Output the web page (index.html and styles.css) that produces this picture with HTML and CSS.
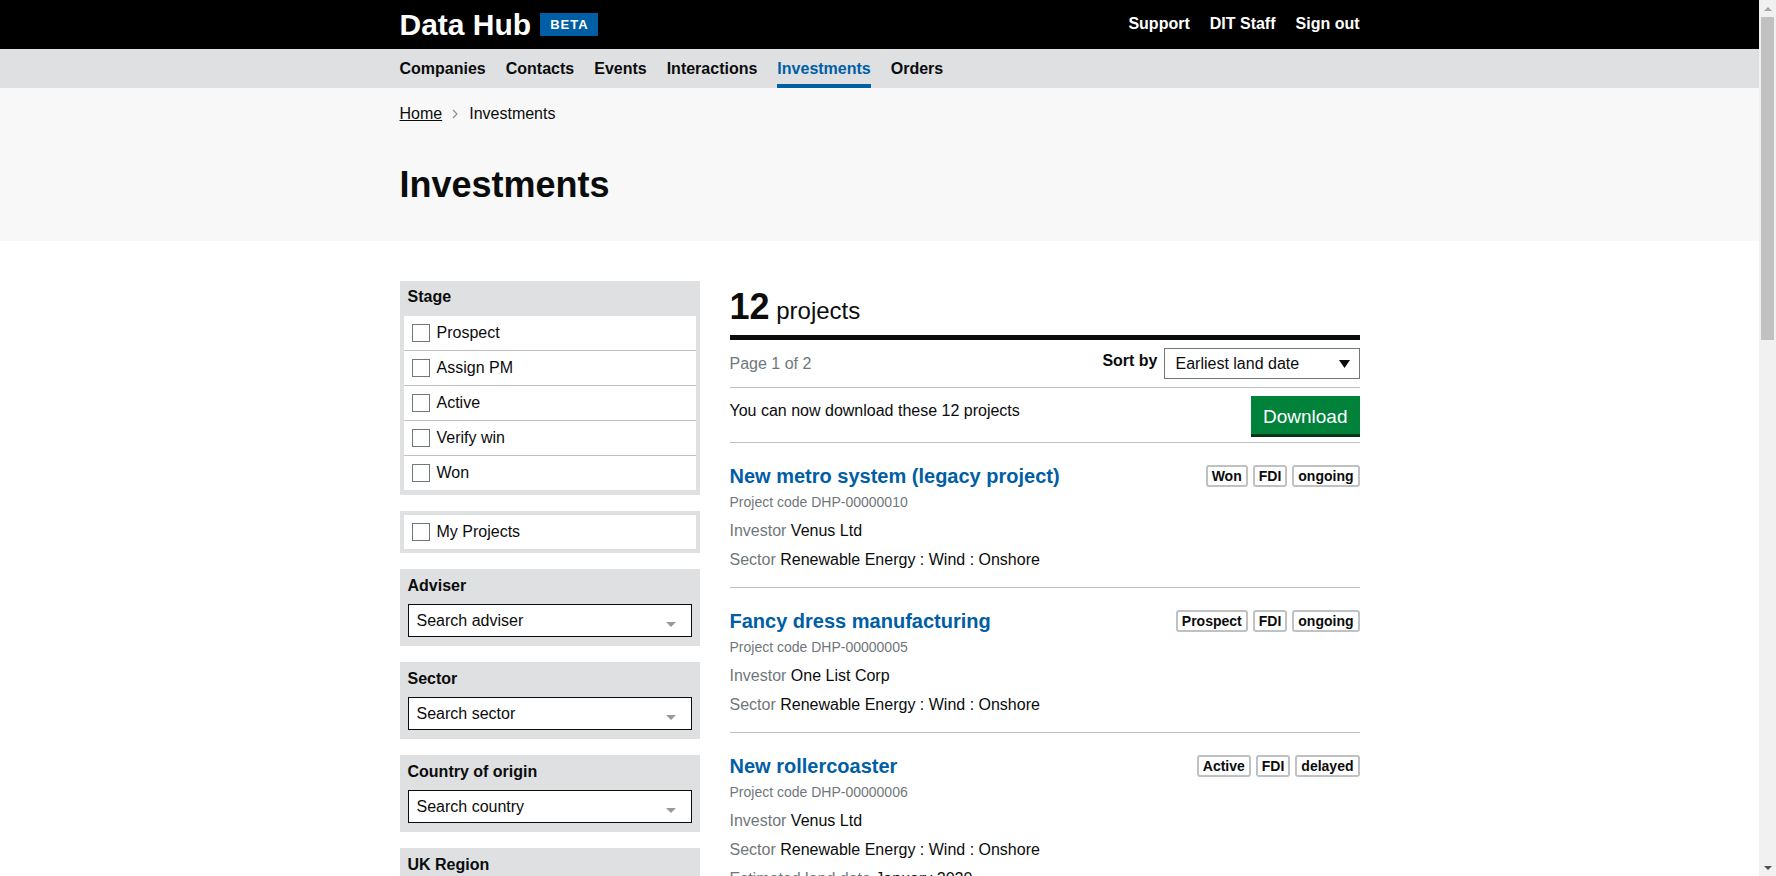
FILE: index.html
```html
<!DOCTYPE html>
<html lang="en">
<head>
<meta charset="utf-8">
<title>Investments - Data Hub</title>
<link rel="stylesheet" href="styles.css">
</head>
<body>
<div class="page">
<header class="site-header">
  <div class="container header-inner">
    <a class="logo" href="#">Data Hub</a>
    <span class="beta">BETA</span>
    <nav class="header-links">
      <a href="#">Support</a>
      <a href="#">DIT Staff</a>
      <a href="#">Sign out</a>
    </nav>
  </div>
</header>
<nav class="main-nav">
  <div class="container nav-inner">
    <a href="#">Companies</a>
    <a href="#">Contacts</a>
    <a href="#">Events</a>
    <a href="#">Interactions</a>
    <a href="#" class="active">Investments</a>
    <a href="#">Orders</a>
  </div>
</nav>
<div class="page-header">
  <div class="container">
    <div class="breadcrumb">
      <a href="#">Home</a>
      <svg class="crumb-sep" width="6" height="10" viewBox="0 0 6 10"><path d="M1 1l4 4-4 4" fill="none" stroke="#8a8f91" stroke-width="1.2"/></svg>
      <span>Investments</span>
    </div>
    <h1>Investments</h1>
  </div>
</div>
<main class="container layout">
  <aside class="filters">
    <div class="filter-box">
      <div class="filter-title">Stage</div>
      <div class="options">
        <label class="option"><span class="cb"></span>Prospect</label>
        <label class="option"><span class="cb"></span>Assign PM</label>
        <label class="option"><span class="cb"></span>Active</label>
        <label class="option"><span class="cb"></span>Verify win</label>
        <label class="option"><span class="cb"></span>Won</label>
      </div>
    </div>
    <div class="filter-box single">
      <label class="option"><span class="cb"></span>My Projects</label>
    </div>
    <div class="filter-box">
      <div class="filter-title">Adviser</div>
      <div class="typeahead"><span>Search adviser</span><span class="ta-arrow"></span></div>
    </div>
    <div class="filter-box">
      <div class="filter-title">Sector</div>
      <div class="typeahead"><span>Search sector</span><span class="ta-arrow"></span></div>
    </div>
    <div class="filter-box">
      <div class="filter-title">Country of origin</div>
      <div class="typeahead"><span>Search country</span><span class="ta-arrow"></span></div>
    </div>
    <div class="filter-box">
      <div class="filter-title">UK Region</div>
      <div class="typeahead"><span>Search UK region</span><span class="ta-arrow"></span></div>
    </div>
    <div class="filter-box">
      <div class="filter-title">Investment type</div>
      <div class="options">
        <label class="option"><span class="cb"></span>Commitment to invest</label>
        <label class="option"><span class="cb"></span>FDI</label>
        <label class="option"><span class="cb"></span>Non-FDI</label>
      </div>
    </div>
  </aside>

  <section class="results">
    <div class="results-header">
      <h2><span class="count">12</span> projects</h2>
    </div>
    <div class="toolbar">
      <span class="page-count">Page 1 of 2</span>
      <div class="sort">
        <span class="sort-label">Sort by</span>
        <div class="select"><span>Earliest land date</span>
          <svg width="11" height="8" viewBox="0 0 11 8"><polygon points="0,0 11,0 5.5,8" fill="#0b0c0c"/></svg>
        </div>
      </div>
    </div>
    <div class="download-row">
      <p>You can now download these 12 projects</p>
      <a class="btn" href="#">Download</a>
    </div>

    <ol class="items">
      <li class="item">
        <div class="item-head">
          <a class="item-title" href="#">New metro system (legacy project)</a>
          <div class="tags"><span class="tag">Won</span><span class="tag">FDI</span><span class="tag">ongoing</span></div>
        </div>
        <div class="code">Project code DHP-00000010</div>
        <div class="meta"><span class="label">Investor</span> Venus Ltd</div>
        <div class="meta"><span class="label">Sector</span> Renewable Energy : Wind : Onshore</div>
      </li>
      <li class="item">
        <div class="item-head">
          <a class="item-title" href="#">Fancy dress manufacturing</a>
          <div class="tags"><span class="tag">Prospect</span><span class="tag">FDI</span><span class="tag">ongoing</span></div>
        </div>
        <div class="code">Project code DHP-00000005</div>
        <div class="meta"><span class="label">Investor</span> One List Corp</div>
        <div class="meta"><span class="label">Sector</span> Renewable Energy : Wind : Onshore</div>
      </li>
      <li class="item">
        <div class="item-head">
          <a class="item-title" href="#">New rollercoaster</a>
          <div class="tags"><span class="tag">Active</span><span class="tag">FDI</span><span class="tag">delayed</span></div>
        </div>
        <div class="code">Project code DHP-00000006</div>
        <div class="meta"><span class="label">Investor</span> Venus Ltd</div>
        <div class="meta"><span class="label">Sector</span> Renewable Energy : Wind : Onshore</div>
        <div class="meta"><span class="label">Estimated land date</span> January 2020</div>
      </li>
    </ol>
  </section>
</main>
</div>
<div class="scrollbar" aria-hidden="true">
  <span class="sb-btn sb-up"></span>
  <span class="sb-track"><span class="sb-thumb"></span></span>
  <span class="sb-btn sb-down"></span>
</div>
</body>
</html>
```
FILE: styles.css
```css
* {
  box-sizing: border-box;
}

html {
  background: #fff;
  overflow: hidden;
}

body {
  margin: 0;
  font-family: "Liberation Sans", Arial, sans-serif;
  font-size: 16px;
  color: #0b0c0c;
  background: #fff;
  display: flex;
  align-items: flex-start;
}

a {
  color: inherit;
}

.page {
  flex: 1;
  min-width: 0;
}

/* Window scrollbar */
.scrollbar {
  flex: none;
  width: 17px;
  height: 100vh;
  position: sticky;
  top: 0;
  background: #f1f1f1;
  display: flex;
  flex-direction: column;
}

.sb-btn {
  flex: none;
  height: 17px;
  display: flex;
  align-items: center;
  justify-content: center;
}

.sb-btn::before {
  content: "";
  width: 0;
  height: 0;
  border-left: 4px solid transparent;
  border-right: 4px solid transparent;
}

.sb-up::before {
  border-bottom: 4px solid #a3a3a3;
}

.sb-down::before {
  border-top: 4px solid #505050;
}

.sb-track {
  flex: 1;
  padding: 0 2px;
}

.sb-thumb {
  display: block;
  height: 323px;
  background: #c1c1c1;
}

.container {
  width: 960px;
  margin: 0 auto;
}

/* Header */
.site-header {
  background: #000;
  height: 49px;
}

.header-inner {
  display: flex;
  align-items: center;
  height: 49px;
}

.logo {
  color: #fff;
  font-size: 30px;
  font-weight: bold;
  line-height: 30px;
  text-decoration: none;
}

.beta {
  margin-left: 9px;
  background: #005ea5;
  color: #fff;
  font-size: 13px;
  font-weight: bold;
  letter-spacing: 1px;
  height: 23px;
  line-height: 23px;
  padding: 0 9px 0 10px;
}

.header-links {
  margin-left: auto;
  display: flex;
  gap: 20px;
  margin-bottom: 2px;
}

.header-links a {
  color: #fff;
  font-weight: bold;
  text-decoration: none;
}

/* Main nav */
.main-nav {
  background: #dee0e2;
  height: 39px;
}

.nav-inner {
  display: flex;
  gap: 20px;
  height: 39px;
}

.nav-inner a {
  display: flex;
  align-items: center;
  border-top: 4px solid transparent;
  border-bottom: 4px solid transparent;
  color: #0b0c0c;
  font-weight: bold;
  text-decoration: none;
}

.nav-inner a.active {
  color: #005ea5;
  border-bottom-color: #005ea5;
}

/* Page header */
.page-header {
  background: #f8f8f8;
  padding: 16px 0 35px;
}

.breadcrumb {
  display: flex;
  align-items: center;
  line-height: 20px;
}

.breadcrumb a {
  color: #0b0c0c;
  text-decoration: underline;
}

.crumb-sep {
  margin: 0 11px 0 10px;
}

h1 {
  margin: 39px 0 0;
  font-size: 36px;
  line-height: 43px;
  font-weight: bold;
}

/* Layout */
.layout {
  display: grid;
  grid-template-columns: 300px 630px;
  column-gap: 30px;
  padding-top: 40px;
  padding-bottom: 60px;
  align-items: start;
}

/* Filters */
.filter-box {
  background: #dee0e2;
  margin-bottom: 16px;
}

.filter-title {
  font-weight: bold;
  height: 35px;
  padding: 7px 8px 0;
  line-height: 20px;
}

.filter-box:first-child .filter-title {
  padding-top: 6px;
}

.options {
  margin: 0 4px;
  padding-bottom: 5px;
}

.option {
  display: flex;
  align-items: center;
  height: 34px;
  padding-left: 8px;
  background: #fff;
}

.option + .option {
  height: 35px;
  border-top: 1px solid #bfc1c3;
}

.filter-box.single {
  padding: 4px;
}

.cb {
  width: 18px;
  height: 18px;
  border: 1px solid #6f777b;
  background: #fff;
  margin-right: 7px;
  flex: none;
}

.typeahead {
  display: flex;
  align-items: center;
  margin: 0 8px;
  height: 33px;
  border: 1px solid #0b0c0c;
  background: #fff;
  padding-left: 8px;
  line-height: 31px;
}

.filter-box:has(.typeahead) {
  padding-bottom: 9px;
}

.ta-arrow {
  margin-left: auto;
  margin-right: 15px;
  margin-top: 7px;
  width: 0;
  height: 0;
  border-left: 5px solid transparent;
  border-right: 5px solid transparent;
  border-top: 5px solid #999;
}

/* Results */
.results-header {
  margin-top: 4px;
  padding-bottom: 7px;
  border-bottom: 5px solid #0b0c0c;
}

h2 {
  margin: 0;
  height: 43px;
  font-size: 24px;
  line-height: 43px;
  font-weight: normal;
}

.count {
  font-size: 36px;
  font-weight: bold;
}

.toolbar {
  display: flex;
  align-items: center;
  justify-content: space-between;
  padding: 8px 0;
  border-bottom: 1px solid #bfc1c3;
}

.page-count {
  color: #6f777b;
}

.sort {
  display: flex;
  align-items: center;
  gap: 6px;
}

.sort-label {
  font-weight: bold;
  margin-bottom: 5px;
}

.select {
  display: flex;
  align-items: center;
  justify-content: space-between;
  width: 196px;
  height: 31px;
  border: 1px solid #6f777b;
  padding: 0 9px 0 11px;
}

.download-row {
  display: flex;
  justify-content: space-between;
  align-items: flex-start;
  padding: 8px 0;
  border-bottom: 1px solid #bfc1c3;
}

.download-row p {
  margin: 5px 0 0;
  line-height: 20px;
}

.btn {
  display: block;
  background: #00823b;
  color: #fff;
  font-size: 19px;
  height: 38px;
  line-height: 34px;
  padding: 4px 12px 0;
  text-decoration: none;
  box-shadow: 0 3px 0 #003618;
}

.items {
  list-style: none;
  margin: 0;
  padding: 0;
}

.item {
  padding: 21px 0 15px;
  border-bottom: 1px solid #bfc1c3;
}

.item-head {
  display: flex;
  justify-content: space-between;
  align-items: flex-start;
}

.item-title {
  font-size: 20px;
  font-weight: bold;
  line-height: 25px;
  color: #005ea5;
  text-decoration: none;
}

.tags {
  display: flex;
  gap: 5px;
  margin-top: 1px;
}

.tag {
  border: 2px solid #bfc1c3;
  border-radius: 3px;
  font-size: 14px;
  font-weight: bold;
  line-height: 18px;
  padding: 0 4px;
  background: #fff;
}

.code {
  color: #6f777b;
  font-size: 14px;
  line-height: 20px;
  margin-top: 3px;
}

.meta {
  line-height: 24px;
  margin-top: 5px;
}

.code + .meta {
  margin-top: 7px;
}

.label {
  color: #6f777b;
}
```
